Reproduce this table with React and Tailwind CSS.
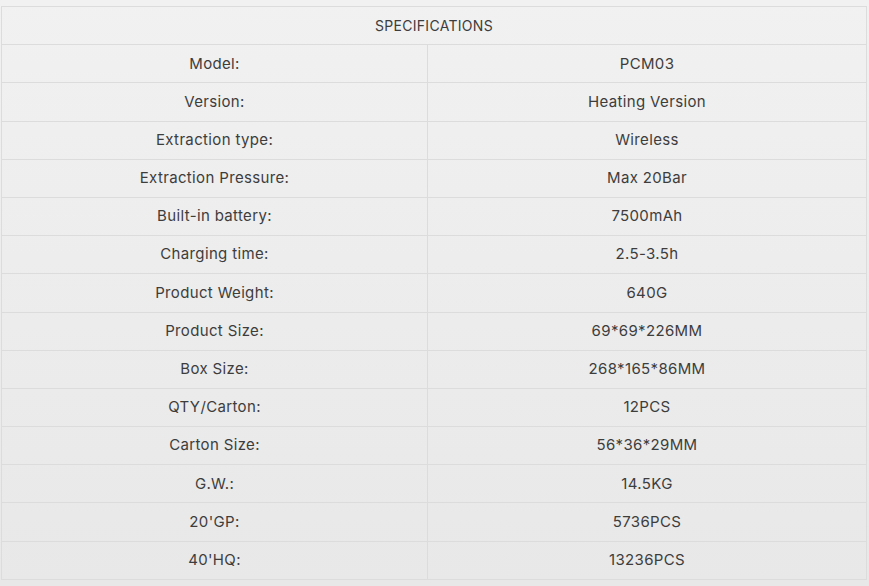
import React from 'react';

const SPECS = [
  ['Model:', 'PCM03'],
  ['Version:', 'Heating Version'],
  ['Extraction type:', 'Wireless'],
  ['Extraction Pressure:', 'Max 20Bar'],
  ['Built-in battery:', '7500mAh'],
  ['Charging time:', '2.5-3.5h'],
  ['Product Weight:', '640G'],
  ['Product Size:', '69*69*226MM'],
  ['Box Size:', '268*165*86MM'],
  ['QTY/Carton:', '12PCS'],
  ['Carton Size:', '56*36*29MM'],
  ['G.W.:', '14.5KG'],
  ["20'GP:", '5736PCS'],
  ["40'HQ:", '13236PCS'],
];

export default function App() {
  return (
    <div
      className="w-[869px] h-[586px] bg-gradient-to-b from-[#f1f1f1] to-[#e8e8e8] pt-[6px] pl-[1px] text-[#3d3d3d]"
      style={{ fontFamily: 'Inter, "Liberation Sans", sans-serif' }}
    >
      <table className="w-[866px] border-collapse text-[15px] text-center tracking-[0.35px]">
        <thead>
          <tr className="h-[38.2px]">
            <th colSpan={2} className="border border-[#dcdcdc] font-normal text-[14px] tracking-[0.3px]">
              SPECIFICATIONS
            </th>
          </tr>
        </thead>
        <tbody>
          {SPECS.map(([label, value]) => (
            <tr key={label} className="h-[38.2px]">
              <td className="w-[426px] border border-[#dcdcdc]">{label}</td>
              <td className="border border-[#dcdcdc]">{value}</td>
            </tr>
          ))}
        </tbody>
      </table>
    </div>
  );
}
